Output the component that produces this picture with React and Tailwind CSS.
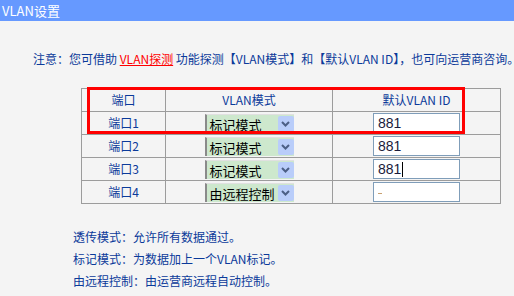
const ports = [
  { name: "端口1", mode: "标记模式", id: "881" },
  { name: "端口2", mode: "标记模式", id: "881" },
  { name: "端口3", mode: "标记模式", id: "881", caret: true },
  { name: "端口4", mode: "由远程控制", id: "" },
];

const cjk = "font-['SimSun','Noto_Sans_CJK_SC',sans-serif]";

function ModeSelect({ value }) {
  return (
    <div className="mx-auto flex h-[19px] w-[89px] border-l-2 border-t border-l-[#8a8a8a] border-t-[#e0e0e0] bg-[#cde8cd]">
      <span className="flex-1 pl-[3px] text-[13px] leading-[19px] text-black whitespace-nowrap">{value}</span>
      <span className="my-[1px] flex w-[16px] shrink-0 items-center justify-center rounded-[2px] bg-[#b9cdfa]">
        <svg width="9" height="6" viewBox="0 0 9 6">
          <path d="M1 1 L4.5 4.5 L8 1" fill="none" stroke="#4c5f86" strokeWidth="2" />
        </svg>
      </span>
    </div>
  );
}

function IdInput({ value, caret }) {
  return (
    <div className="mx-auto flex h-[20px] w-[87px] items-center border border-[#7f9db9] bg-white pl-[4px] font-['Liberation_Sans',sans-serif] text-[14px] text-[#1a1a3a]">
      {value ? value : <span className="mt-[3px] h-[1px] w-[4px] bg-[#c8a070]" />}
      {caret && <span className="ml-[1px] h-[15px] w-[1px] bg-black" />}
    </div>
  );
}

export default function App() {
  return (
    <div className={`h-[296px] w-[514px] bg-[#f4f4f4] ${cjk} text-[12px] text-[#0b3a9a]`}>
      <div className="h-[21px] bg-[#6699ff] pl-[2px] text-[13px] leading-[21px] text-white">VLAN设置</div>

      <p className="mt-[31px] pl-[33px] leading-[14px] whitespace-nowrap">
        注意：您可借助 <span className="text-[#ff0000] underline">VLAN探测</span> 功能探测【VLAN模式】和【默认VLAN ID】，也可向运营商咨询。
      </p>

      <div className="relative ml-[81px] mt-[22px] w-[420px]">
        <table className="w-full border-collapse border border-[#9c9c9c]">
          <colgroup>
            <col className="w-[84px]" />
            <col className="w-[167px]" />
            <col />
          </colgroup>
          <thead>
            <tr className="h-[23px]">
              <th className="border border-[#9c9c9c] font-normal">端口</th>
              <th className="border border-[#9c9c9c] font-normal">VLAN模式</th>
              <th className="border border-[#9c9c9c] font-normal">默认VLAN ID</th>
            </tr>
          </thead>
          <tbody>
            {ports.map((p) => (
              <tr key={p.name} className="h-[23px]">
                <td className="border border-[#9c9c9c] text-center">{p.name}</td>
                <td className="border border-[#9c9c9c] p-0">
                  <ModeSelect value={p.mode} />
                </td>
                <td className="border border-[#9c9c9c] p-0">
                  <IdInput value={p.id} caret={p.caret} />
                </td>
              </tr>
            ))}
          </tbody>
        </table>
        <div className="pointer-events-none absolute left-[6px] top-[-1px] h-[47px] w-[378px] border-[3px] border-[#ff0000]" />
      </div>

      <div className="mt-[22px] pl-[73px] leading-[22px]">
        <p>透传模式：允许所有数据通过。</p>
        <p>标记模式：为数据加上一个VLAN标记。</p>
        <p>由远程控制：由运营商远程自动控制。</p>
      </div>
    </div>
  );
}
